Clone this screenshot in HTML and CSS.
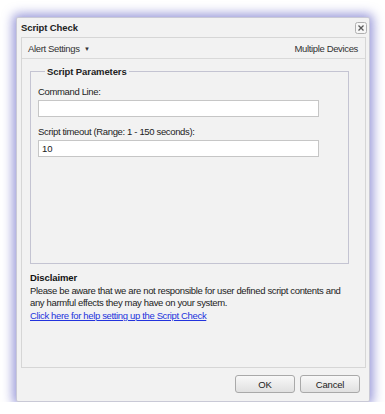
FILE: index.html
```html
<!DOCTYPE html>
<html>
<head>
<meta charset="utf-8">
<link rel="stylesheet" href="styles.css">
</head>
<body>
<div class="dialog">
  <div class="titlebar">
    <span class="title">Script Check</span>
    <span class="close"><svg width="12" height="12" viewBox="0 0 12 12"><rect x="0.5" y="0.5" width="11" height="11" rx="2" fill="#f6f6f6" stroke="#b0b0b0"/><path d="M3.5 3.5L8.5 8.5M8.5 3.5L3.5 8.5" stroke="#5a5a5a" stroke-width="1.3"/></svg></span>
  </div>
  <div class="panel">
    <div class="toolbar">
      <span class="menu">Alert Settings <span class="caret">&#9660;</span></span>
      <span class="devices">Multiple Devices</span>
    </div>
    <div class="content">
      <fieldset class="params">
        <legend>Script Parameters</legend>
        <label class="lbl">Command Line:</label>
        <input class="field" type="text" value="">
        <label class="lbl">Script timeout (Range: 1 - 150 seconds):</label>
        <input class="field" type="text" value="10">
      </fieldset>
      <div class="disclaimer">
        <div class="dtitle">Disclaimer</div>
        <div class="dtext">Please be aware that we are not responsible for user defined script contents and any harmful effects they may have on your system.</div>
        <a class="help" href="#">Click here for help setting up the Script Check</a>
      </div>
    </div>
  </div>
  <div class="footer">
    <button class="btn">OK</button>
    <button class="btn">Cancel</button>
  </div>
</div>
</body>
</html>
```
FILE: styles.css
```css
html, body { margin: 0; padding: 0; background: #fff; }
body {
  font-family: "Liberation Sans", Arial, sans-serif;
  font-size: 9.5px;
  letter-spacing: -0.35px;
  color: #222;
  padding: 17px 15px 0 16px;
}
.dialog {
  width: 354px;
  height: 385px;
  box-sizing: border-box;
  background: #f2f2f2;
  border: 1px solid #c9c9d6;
  border-radius: 2px;
  box-shadow: 0 0 11px 3px rgba(80, 80, 190, 0.6);
  display: flex;
  flex-direction: column;
  padding: 0 3px 0 4px;
}
.titlebar {
  height: 19px;
  display: flex;
  align-items: center;
  justify-content: space-between;
}
.title { font-weight: bold; color: #222; font-size: 9.5px; letter-spacing: -0.1px; }
.close { display: flex; margin-top: 1px; margin-right: -1px; }
.panel {
  flex: 0 0 331px;
  border: 1px solid #d6d6d6;
  box-sizing: border-box;
  display: flex;
  flex-direction: column;
}
.toolbar {
  height: 21px;
  box-sizing: border-box;
  border-bottom: 1px solid #d9d9d9;
  display: flex;
  align-items: center;
  justify-content: space-between;
  padding: 0 7px 0 6px;
  color: #333;
}
.caret { font-size: 6px; margin-left: 2px; vertical-align: 1px; }
.content { padding: 7px 16px 0 8px; }
.params {
  margin: 0;
  border: 1px solid #c4c4d2;
  padding: 7px 0 0 7px;
  height: 198px;
  box-sizing: border-box;
}
.params legend { font-weight: bold; padding: 0 2px; margin-left: 7px; color: #222; font-size: 9.5px; letter-spacing: -0.1px; }
.lbl { display: block; height: 12px; line-height: 12px; color: #222; margin-top: 2px; }
.field {
  display: block;
  width: 281px;
  height: 17px;
  box-sizing: border-box;
  margin: 2px 0 0 0;
  border: 1px solid #c6c6c6;
  background: #fff;
  font-family: inherit;
  font-size: 9.5px;
  padding: 0 3px;
  color: #222;
}
.field + .lbl { margin-top: 9px; }
.disclaimer { margin-top: 8px; line-height: 12.5px; }
.dtitle { font-weight: bold; color: #111; font-size: 9.5px; letter-spacing: -0.1px; }
.dtext { color: #222; }
.help { color: #2233dd; text-decoration: underline; }
.footer {
  flex: 1;
  display: flex;
  justify-content: flex-end;
  align-items: flex-start;
  gap: 5px;
  padding: 7px 6px 0 0;
}
.btn {
  width: 60px;
  height: 18px;
  box-sizing: border-box;
  border: 1px solid #a9a9a9;
  border-radius: 3px;
  background: linear-gradient(#f8f8f8, #e0e0e0);
  font-family: inherit;
  font-size: 9.5px;
  letter-spacing: -0.2px;
  color: #222;
  padding: 0;
}
```
